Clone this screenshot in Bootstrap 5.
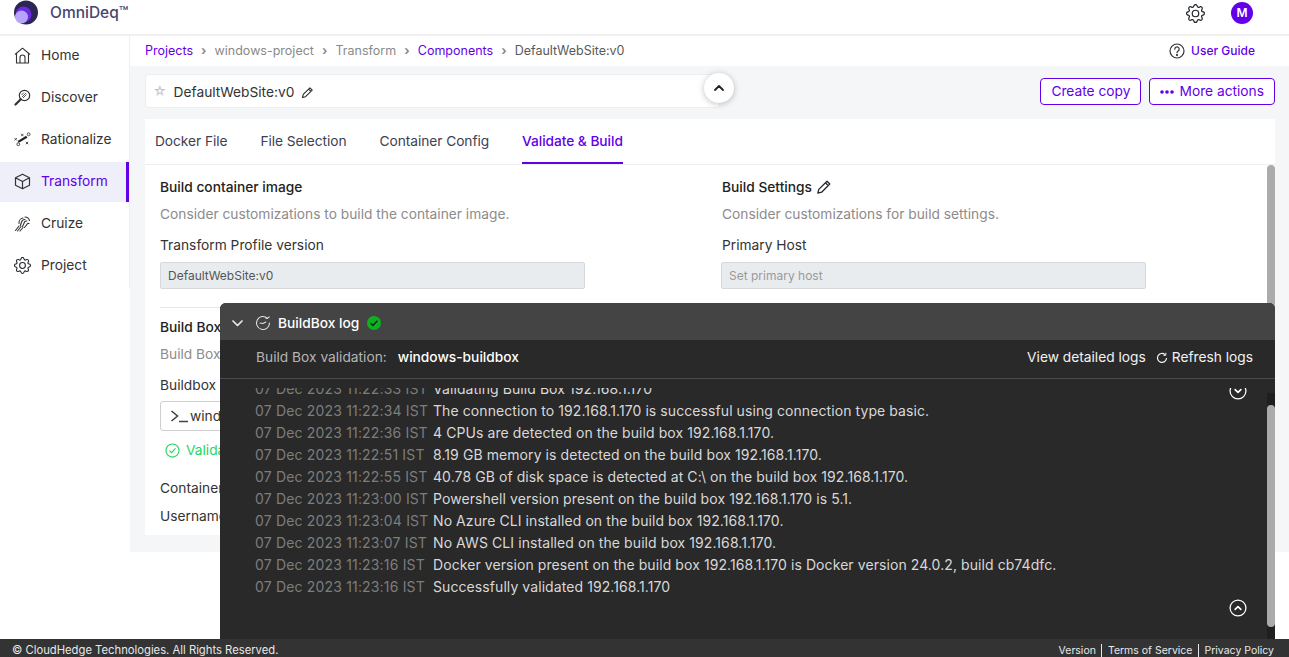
<!DOCTYPE html>
<html lang="en">
<head>
<meta charset="UTF-8"/>
<meta name="viewport" content="width=device-width,initial-scale=1.0"/>
<title>OmniDeq - Validate &amp; Build</title>
<link href="https://cdn.jsdelivr.net/npm/bootstrap@5.3.0/dist/css/bootstrap.min.css" rel="stylesheet">
<style>
  html, body { height: 100%; }
  body { font-family: Inter, "Liberation Sans", sans-serif; font-size: 13.75px; color: #333; overflow: hidden; background: #fff; }
  .app-head { height: 36px; border-bottom: 2px solid #f0f0f0; padding: 0 36px 8px 14px; }
  .brand-logo { align-self: flex-start; }
  .brand-name { font-size: 15.5px; font-weight: 500; color: #4a4470; margin-left: 12px; }
  .head-gear { margin-right: 26px; }
  .avatar { width: 22px; height: 22px; border-radius: 50%; background: #6200ea; color: #fff; font-size: 12px; font-weight: 600; }
  .app-body { height: 603px; }
  .side { width: 130px; height: 252px; border-right: 1px solid #f0f0f0; flex: none; }
  .side-item { height: 40px; margin-bottom: 2px; padding: 0 0 1px 14px; gap: 10px; color: #333; text-decoration: none; }
  .side-item.on { background: #eeeff8; color: #6200ea; border-right: 3px solid #6200ea; }
  .main-col { height: 516px; background: #f5f6f8; min-width: 0; }
  .crumbs { height: 30px; padding: 0 34px 0 15px; font-size: 12.5px; color: #8a8a8a; gap: 8.1px; }
  .crumbs a { color: #6200ea; text-decoration: none; }
  .crumbs b { font-weight: 700; color: #8a8a8a; }
  .crumbs .here { color: #5a5a5a; }
  .guide { color: #6200ea; font-weight: 500; font-size: 12px; gap: 6px; }
  .title-row { height: 53px; padding: 8px 14px 0 15px; }
  .title-box { width: 575px; height: 34px; background: #fff; border: 1px solid #eee; border-radius: 3px; padding: 2px 0 0 7px; gap: 7px; }
  .title-star { color: #c4c4c4; font-size: 13px; }
  .fold-btn { width: 30px; height: 30px; border-radius: 50%; background: #fff; box-shadow: 0 1px 6px rgba(0,0,0,.25); margin-left: -16px; margin-top: -1px; }
  .act-btn { height: 27px; padding: 0 10px; font-size: 13.75px; color: #6200ea; border: 1px solid #6200ea; border-radius: 4px; background: #fff; line-height: 1; gap: 5px; }
  .act-btn:hover { color: #6200ea; background: #fff; border-color: #6200ea; }
  .work-card { margin: 0 14px 0 15px; height: 416px; background: #fff; overflow: hidden; position: relative; }
  .tab-row { height: 46px; border-bottom: 1px solid #eee; padding-left: 10px; gap: 33px; letter-spacing: -.06px; }
  .tab-row span { height: 45px; line-height: 44px; color: #3d4152; }
  .tab-row span.on { color: #6200ea; border-bottom: 2px solid #6200ea; font-weight: 500; }
  .form-cols { padding: 12px 0 0 15px; }
  .form-col { width: 562px; flex: none; }
  .form-col + .form-col { width: 440px; }
  .form-col + .form-col .fld-box { margin-left: -1px; }
  .sec-name { font-weight: 500; line-height: 20px; color: #222; }
  .sec-note { color: #8c8c8c; line-height: 20px; margin-top: 7px; }
  .fld-label { line-height: 20px; margin-top: 11px; }
  .fld-box { width: 425px; height: 27px; margin-top: 7px; background: #e9ecef; border: 1px solid #d6d8dc; border-radius: 2px; padding-left: 7px; font-size: 12px; color: #555; }
  .fld-box.empty { color: #9a9a9a; }
  .sec-line { height: 1px; background: #e6e6e6; margin: 18px 15px 0 15px; }
  .lower { padding: 9px 0 0 15px; }
  .shell-box { width: 425px; height: 30px; margin-top: 6px; border: 1px solid #cfcfcf; border-radius: 3px; padding-left: 9px; gap: 1px; }
  .ok-line { color: #1ed760; margin: 9px 0 0 5px; gap: 6px; line-height: 20px; }
  .fld-label.form-gap-a { margin-top: 18px; }
  .fld-label.form-gap-b { margin-top: 8px; }
  .card-thumb { position: absolute; right: 0; top: 46px; width: 8px; height: 370px; background: #ababab; border-radius: 4px 4px 0 0; }
  .log-panel { position: absolute; left: 220px; top: 303px; width: 1055px; height: 336px; background: #292929; border-radius: 6px 6px 0 0; color: #d8d8d8; overflow: hidden; }
  .log-head { height: 37px; background: #444; padding: 3px 0 0 11px; color: #fff; font-weight: 500; }
  .log-clock { margin: 0 7px 0 11px; }
  .log-sub { height: 39px; border-bottom: 1px solid #4a4a4a; padding: 0 22px 3px 36px; }
  .log-sub .who { color: #fff; font-weight: 500; margin-left: 11px; }
  .log-sub .lbl { color: #b5b5b5; }
  .log-links { color: #f2f2f2; gap: 10px; }
  .log-view { height: 251px; margin-top: 9px; overflow: hidden; position: relative; padding-left: 35px; }
  .log-rows { margin-top: -10px; }
  .log-row { height: 22px; line-height: 22px; white-space: nowrap; font-size: 14px; letter-spacing: .08px; }
  .log-row time { color: #7d7d7d; display: inline-block; width: 178px; letter-spacing: .17px; }
  .go-top, .go-end { position: absolute; right: 28px; width: 18px; height: 18px; }
  .go-top { top: -6px; }
  .go-end { top: 211px; }
  .log-track { position: absolute; right: 0; top: 5px; width: 8px; height: 246px; background: #1f1f1f; }
  .log-thumb { position: absolute; right: 0; top: 17px; width: 8px; height: 222px; background: #ababab; border-radius: 4px; }
  .app-foot { position: absolute; left: 0; right: 0; bottom: 0; height: 18px; background: #333; color: #e8e8e8; font-size: 11.25px; padding: 4px 15px 0 12px; }
  .foot-links { font-size: 10.5px; }
  .foot-links span { padding: 0 5.5px; border-left: 1px solid #e8e8e8; line-height: 13px; }
  .foot-links span:first-child { border-left: 0; }
  .foot-links span:last-child { padding-right: 0; }
</style>
</head>
<body>
<svg width="0" height="0" class="position-absolute">
  <symbol id="i-gear" viewBox="0 0 16 16">
    <path fill="currentColor" d="M8 4.754a3.246 3.246 0 1 0 0 6.492 3.246 3.246 0 0 0 0-6.492zM5.754 8a2.246 2.246 0 1 1 4.492 0 2.246 2.246 0 0 1-4.492 0z"/>
    <path fill="currentColor" d="M9.796 1.343c-.527-1.79-3.065-1.79-3.592 0l-.094.319a.873.873 0 0 1-1.255.52l-.292-.16c-1.64-.892-3.433.902-2.54 2.541l.159.292a.873.873 0 0 1-.52 1.255l-.319.094c-1.79.527-1.79 3.065 0 3.592l.319.094a.873.873 0 0 1 .52 1.255l-.16.292c-.892 1.64.901 3.434 2.541 2.54l.292-.159a.873.873 0 0 1 1.255.52l.094.319c.527 1.79 3.065 1.79 3.592 0l.094-.319a.873.873 0 0 1 1.255-.52l.292.16c1.64.893 3.434-.902 2.54-2.541l-.159-.292a.873.873 0 0 1 .52-1.255l.319-.094c1.79-.527 1.79-3.065 0-3.592l-.319-.094a.873.873 0 0 1-.52-1.255l.16-.292c.893-1.64-.902-3.433-2.541-2.54l-.292.159a.873.873 0 0 1-1.255-.52l-.094-.319zm-2.633.283c.246-.835 1.428-.835 1.674 0l.094.319a1.873 1.873 0 0 0 2.693 1.115l.291-.16c.764-.415 1.6.42 1.184 1.185l-.159.292a1.873 1.873 0 0 0 1.116 2.692l.318.094c.835.246.835 1.428 0 1.674l-.319.094a1.873 1.873 0 0 0-1.115 2.693l.16.291c.415.764-.42 1.6-1.185 1.184l-.291-.159a1.873 1.873 0 0 0-2.693 1.116l-.094.318c-.246.835-1.428.835-1.674 0l-.094-.319a1.873 1.873 0 0 0-2.692-1.115l-.292.16c-.764.415-1.6-.42-1.184-1.185l.159-.291A1.873 1.873 0 0 0 1.945 8.930l-.319-.094c-.835-.246-.835-1.428 0-1.674l.319-.094A1.873 1.873 0 0 0 3.060 4.377l-.16-.292c-.415-.764.42-1.600 1.185-1.184l.292.159a1.873 1.873 0 0 0 2.692-1.115l.094-.319z"/>
  </symbol>
  <symbol id="i-pen" viewBox="0 0 16 16">
    <path fill="none" stroke="currentColor" stroke-width="1.300" stroke-linejoin="round" d="M11 2.200 13.800 5 5.600 13.200 1.800 14.200 2.800 10.400zM9.400 3.800l2.800 2.800"/>
  </symbol>
  <symbol id="i-up" viewBox="0 0 20 20">
    <circle cx="10" cy="10" r="8.800" fill="none" stroke="currentColor" stroke-width="1.400"/>
    <path d="M6.800 11.600 10 8.400l3.200 3.200" fill="none" stroke="currentColor" stroke-width="1.800" stroke-linecap="round" stroke-linejoin="round"/>
  </symbol>
  <symbol id="i-down" viewBox="0 0 20 20">
    <circle cx="10" cy="10" r="8.800" fill="none" stroke="currentColor" stroke-width="1.400"/>
    <path d="M6.800 8.400 10 11.600l3.200-3.200" fill="none" stroke="currentColor" stroke-width="1.800" stroke-linecap="round" stroke-linejoin="round"/>
  </symbol>
</svg>

<header class="app-head d-flex align-items-center">
  <svg class="brand-logo" width="24" height="25" viewBox="0 0 24 25">
    <circle cx="12" cy="12.500" r="12" fill="#2d2553"/>
    <circle cx="9.500" cy="14.500" r="8" fill="#6a2ce0"/>
    <circle cx="7.500" cy="17" r="6.500" fill="#b6a6fb"/>
  </svg>
  <span class="brand-name">OmniDeq™</span>
  <svg width="19" height="19" class="ms-auto head-gear text-dark"><use href="#i-gear"/></svg>
  <span class="avatar d-flex align-items-center justify-content-center">M</span>
</header>

<div class="app-body d-flex">
  <nav class="side">
    <a class="side-item d-flex align-items-center" href="#">
      <svg width="17" height="17" viewBox="0 0 17 17" fill="none" stroke="#333" stroke-width="1.100" stroke-linejoin="round"><path d="M1 7.500 8.500 1.200 16 7.500M2.500 6.500V16h12V6.500"/><path d="M6 16v-5.500a2.500 2.500 0 0 1 5 0V16"/></svg>
      Home</a>
    <a class="side-item d-flex align-items-center" href="#">
      <svg width="17" height="17" viewBox="0 0 17 17" fill="none" stroke="#333" stroke-width="1.200"><circle cx="10.500" cy="6.500" r="5.200"/><path d="M8 8l4-4M9 9l3.500-3.500M7.500 6l2.500-2.500" stroke-width=".8"/><path d="M6.800 10.200 1.500 15.500" stroke-width="2.200" stroke-linecap="round"/></svg>
      Discover</a>
    <a class="side-item d-flex align-items-center" href="#">
      <svg width="17" height="17" viewBox="0 0 18 17" fill="none" stroke="#444" stroke-width="1"><path d="M.5 7l2.500 2.500M3 7 .5 9.500M7.500 2.500 10 5M10 2.500 7.500 5M12.500 11l2.500 2.500M15 11l-2.500 2.500"/><circle cx="15.500" cy="3" r="1.500"/><circle cx="4.500" cy="13.500" r="1.500"/><path d="M4.500 11 13.500 5.500" stroke="#222" stroke-width="2.400"/></svg>
      Rationalize</a>
    <a class="side-item on d-flex align-items-center" href="#">
      <svg width="17" height="17" viewBox="0 0 17 17" fill="none" stroke="#333" stroke-width="1.200" stroke-linejoin="round"><path d="M8.500 1.200 15.500 4.800v7.400L8.500 15.800 1.500 12.200V4.800zM1.500 4.800l7 3.700 7-3.700M8.500 8.500v7.300"/></svg>
      Transform</a>
    <a class="side-item d-flex align-items-center" href="#">
      <svg width="17" height="17" viewBox="0 0 17 17" fill="none" stroke="#333" stroke-width="1.100" stroke-linecap="round"><path d="M1.500 15.500 5 11M3.500 16 7 11.500M6 16l3-3.500M5 8.500A5 5 0 0 1 9 3M6.500 10.500 7.500 7A3.500 3.500 0 0 1 11 4.500M8.500 11.500 10 8.500A2.500 2.500 0 0 1 13 6M10.500 12.500 12.500 10A2 2 0 0 1 15 8.500M11 2a5 5 0 0 1 4.500 3.500"/></svg>
      Cruize</a>
    <a class="side-item d-flex align-items-center" href="#">
      <svg width="17" height="17" class="text-dark"><use href="#i-gear"/></svg>
      Project</a>
  </nav>

  <main class="main-col flex-grow-1">
    <div class="crumbs bg-white d-flex align-items-center">
      <a href="#">Projects</a><b>&rsaquo;</b><span>windows-project</span><b>&rsaquo;</b><span>Transform</span><b>&rsaquo;</b><a href="#">Components</a><b>&rsaquo;</b><span class="here">DefaultWebSite:v0</span>
      <span class="ms-auto d-flex align-items-center guide">
        <svg width="16" height="16" viewBox="0 0 16 16" fill="none" stroke="#333" stroke-width="1.200"><circle cx="8" cy="8" r="7"/><path d="M5.800 6.200a2.200 2.200 0 1 1 3.400 1.800c-.8.500-1.200.9-1.200 1.800" stroke-linecap="round"/><circle cx="8" cy="12" r=".5" fill="#333"/></svg>
        User Guide</span>
    </div>

    <div class="title-row d-flex align-items-start">
      <div class="title-box d-flex align-items-center">
        <span class="title-star">☆</span>
        <span>DefaultWebSite:v0</span>
        <svg width="13" height="13" class="text-dark"><use href="#i-pen"/></svg>
      </div>
      <div class="fold-btn d-flex align-items-center justify-content-center">
        <svg width="12" height="8" viewBox="0 0 12 8" fill="none" stroke="#222" stroke-width="1.800" stroke-linecap="round" stroke-linejoin="round"><path d="M2 6l4-4 4 4"/></svg>
      </div>
      <div class="ms-auto d-flex gap-2 mt-1">
        <button class="btn act-btn">Create copy</button>
        <button class="btn act-btn d-flex align-items-center">
          <svg width="14" height="4" viewBox="0 0 14 4" fill="#6200ea"><circle cx="2" cy="2" r="1.800"/><circle cx="7" cy="2" r="1.800"/><circle cx="12" cy="2" r="1.800"/></svg>
          More actions</button>
      </div>
    </div>

    <section class="work-card">
      <div class="tab-row d-flex">
        <span>Docker File</span><span>File Selection</span><span>Container Config</span><span class="on">Validate &amp; Build</span>
      </div>
      <div class="form-cols d-flex">
        <div class="form-col">
          <div class="sec-name">Build container image</div>
          <div class="sec-note">Consider customizations to build the container image.</div>
          <div class="fld-label">Transform Profile version</div>
          <div class="fld-box d-flex align-items-center">DefaultWebSite:v0</div>
        </div>
        <div class="form-col">
          <div class="sec-name d-flex align-items-center gap-1">Build Settings <svg width="16" height="16" class="text-dark"><use href="#i-pen"/></svg></div>
          <div class="sec-note">Consider customizations for build settings.</div>
          <div class="fld-label">Primary Host</div>
          <div class="fld-box empty d-flex align-items-center">Set primary host</div>
        </div>
      </div>
      <div class="sec-line"></div>
      <div class="lower">
        <div class="sec-name">Build Box</div>
        <div class="sec-note">Build Box</div>
        <div class="fld-label">Buildbox</div>
        <div class="shell-box d-flex align-items-center">
          <svg width="19" height="14" viewBox="0 0 19 14" fill="none" stroke="#444" stroke-width="1.600"><path d="M1.500 2l6 5-6 5M9 12.500h9"/></svg>
          <span>windows-buildbox</span>
        </div>
        <div class="ok-line d-flex align-items-center">
          <svg width="15" height="15" viewBox="0 0 16 16" fill="none" stroke="#1ed760" stroke-width="1.200"><circle cx="8" cy="8" r="7"/><path d="M4.800 8.200 7 10.400l4.200-4.600"/></svg>
          Validated</div>
        <div class="fld-label form-gap-a">Container</div>
        <div class="fld-label form-gap-b">Username</div>
      </div>
      <div class="card-thumb"></div>
    </section>
  </main>
</div>

<aside class="log-panel">
  <div class="log-head d-flex align-items-center">
    <svg width="13" height="9" viewBox="0 0 13 9" fill="none" stroke="#e8e8e8" stroke-width="1.700" stroke-linecap="round" stroke-linejoin="round"><path d="M2 2l4.500 4.500L11 2"/></svg>
    <svg class="log-clock" width="16" height="16" viewBox="0 0 16 16" fill="none" stroke="#e0e0e0" stroke-width="1.100" stroke-linecap="round"><path d="M14.500 8A6.500 6.500 0 1 1 12.300 3.100M14.200 1.800l-1.700 1.600-1.700-.3"/><path d="M8 8.500 5 8M8 8.500l2.800-1.500"/></svg>
    BuildBox log
    <svg class="ms-2" width="14" height="14" viewBox="0 0 14 14"><circle cx="7" cy="7" r="7" fill="#0fb01e"/><path d="M3.600 7.200 6 9.500l4.400-4.700" fill="none" stroke="#123" stroke-width="1.500"/></svg>
  </div>
  <div class="log-sub d-flex align-items-center">
    <span class="lbl">Build Box validation:</span><span class="who">windows-buildbox</span>
    <div class="ms-auto log-links d-flex align-items-center">
      <span>View detailed logs</span>
      <span class="d-flex align-items-center gap-1">
        <svg width="12" height="12" viewBox="0 0 12 12" fill="none" stroke="#f2f2f2" stroke-width="1.200"><path d="M10.500 6A4.500 4.500 0 1 1 9 2.600"/><path d="M9.800 .8v2.500H7.300" stroke-width="1"/></svg>
        Refresh logs</span>
    </div>
  </div>
  <div class="log-view">
    <div class="log-rows" id="logRows"></div>
    <svg class="go-top text-white"><use href="#i-down"/></svg>
    <svg class="go-end text-white"><use href="#i-up"/></svg>
    <div class="log-track"></div>
    <div class="log-thumb"></div>
  </div>
</aside>

<footer class="app-foot d-flex align-items-center justify-content-between">
  <span>© CloudHedge Technologies. All Rights Reserved.</span>
  <div class="foot-links d-flex"><span>Version</span><span>Terms of Service</span><span>Privacy Policy</span></div>
</footer>

<script>
/* log lines */
const logs = [
  ['07 Dec 2023 11:22:33 IST', 'Validating Build Box 192.168.1.170'],
  ['07 Dec 2023 11:22:34 IST', 'The connection to 192.168.1.170 is successful using connection type basic.'],
  ['07 Dec 2023 11:22:36 IST', '4 CPUs are detected on the build box 192.168.1.170.'],
  ['07 Dec 2023 11:22:51 IST', '8.19 GB memory is detected on the build box 192.168.1.170.'],
  ['07 Dec 2023 11:22:55 IST', '40.78 GB of disk space is detected at C:\\ on the build box 192.168.1.170.'],
  ['07 Dec 2023 11:23:00 IST', 'Powershell version present on the build box 192.168.1.170 is 5.1.'],
  ['07 Dec 2023 11:23:04 IST', 'No Azure CLI installed on the build box 192.168.1.170.'],
  ['07 Dec 2023 11:23:07 IST', 'No AWS CLI installed on the build box 192.168.1.170.'],
  ['07 Dec 2023 11:23:16 IST', 'Docker version present on the build box 192.168.1.170 is Docker version 24.0.2, build cb74dfc.'],
  ['07 Dec 2023 11:23:16 IST', 'Successfully validated 192.168.1.170']
];
document.getElementById('logRows').innerHTML = logs
  .map(l => `<div class="log-row"><time>${l[0]}</time>${l[1]}</div>`).join('');
</script>
<script src="https://cdn.jsdelivr.net/npm/bootstrap@5.3.0/dist/js/bootstrap.bundle.min.js"></script>
</body>
</html>
